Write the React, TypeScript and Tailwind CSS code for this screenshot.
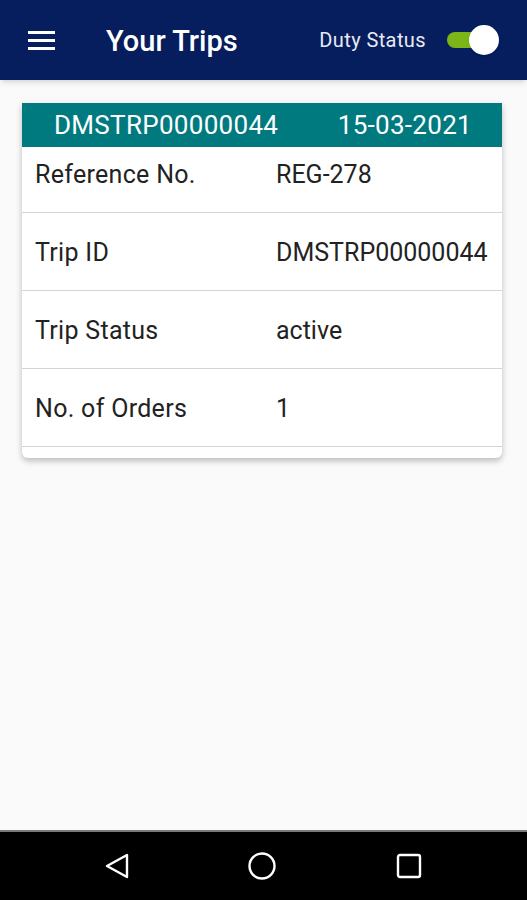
import React from 'react';

const rows = [
  { label: 'Reference No.', value: 'REG-278' },
  { label: 'Trip ID', value: 'DMSTRP00000044' },
  { label: 'Trip Status', value: 'active' },
  { label: 'No. of Orders', value: '1' },
];

const App: React.FC = () => {
  return (
    <div className="w-[527px] h-[900px] flex flex-col bg-[#fafafa] overflow-hidden" style={{ fontFamily: 'Roboto, "Noto Sans", sans-serif' }}>
      <header className="h-[80px] bg-[#061d5e] flex items-center shrink-0 shadow-md">
        <button className="ml-[28px] w-[27px] flex flex-col gap-[5px]" aria-label="menu">
          <span className="block h-[3px] bg-white" />
          <span className="block h-[3px] bg-white" />
          <span className="block h-[3px] bg-white" />
        </button>
        <h1 className="ml-[51px] mt-[3px] text-white text-[29px] font-medium">Your Trips</h1>
        <span className="ml-auto text-[20px] text-[#e8ebf3] tracking-[0.4px]">Duty Status</span>
        <div className="relative ml-[19px] mr-[28px] w-[54px] h-[30px] flex items-center">
          <div className="w-[44px] h-[16px] ml-[2px] rounded-full bg-[#7cb518]" />
          <div className="absolute right-0 top-0 w-[30px] h-[30px] rounded-full bg-white shadow" />
        </div>
      </header>

      <main className="flex-1 px-[22px] pt-[23px]">
        <div className="w-[480px] bg-white rounded-b-[6px] shadow-[0_3px_6px_rgba(0,0,0,0.25)] pb-[11px]">
          <div className="h-[44px] bg-[#007a7f] flex items-center text-white text-[26px] pl-[32px] tracking-[0.3px]">
            <span>DMSTRP00000044</span>
            <span className="ml-auto mr-[30px]">15-03-2021</span>
          </div>
          {rows.map((r, i) => (
            <div
              key={r.label}
              className={`flex border-b border-[#d4d4d4] text-[25px] text-[#222222] leading-[28px] pb-[23px] ${i === 0 ? 'pt-[14px]' : 'pt-[26px]'}`}
            >
              <span className="w-[254px] pl-[13px] tracking-[0.3px]">{r.label}</span>
              <span>{r.value}</span>
            </div>
          ))}
        </div>
      </main>

      <nav className="h-[70px] bg-black border-t-2 border-[#7a7a7a] flex items-center shrink-0">
        <svg className="ml-[104px]" width="26" height="28" viewBox="0 0 26 28">
          <path d="M23 3 L23 25 L3 14 Z" fill="none" stroke="white" strokeWidth="2.4" strokeLinejoin="round" />
        </svg>
        <svg className="ml-[117px]" width="30" height="30" viewBox="0 0 30 30">
          <circle cx="15" cy="15" r="12.5" fill="none" stroke="white" strokeWidth="2.4" />
        </svg>
        <svg className="ml-[119px]" width="26" height="26" viewBox="0 0 26 26">
          <rect x="2" y="2" width="22" height="22" rx="2" fill="none" stroke="white" strokeWidth="2.4" />
        </svg>
      </nav>
    </div>
  );
};

export default App;
